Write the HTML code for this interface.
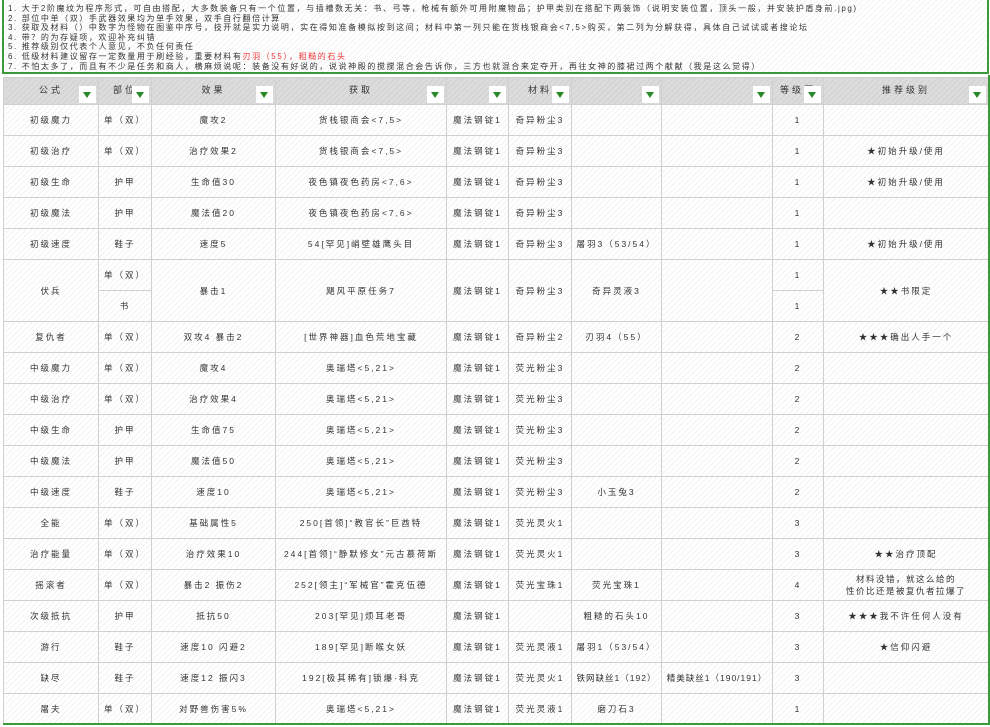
<!DOCTYPE html>
<html><head><meta charset="utf-8"><style>
*{margin:0;padding:0;box-sizing:border-box}
body{width:990px;height:727px;overflow:hidden;background:#fff;font-family:"Liberation Sans","Noto Sans CJK SC",sans-serif;color:#333;position:relative}
.notes{position:absolute;left:2px;top:-2px;width:987px;height:76px;border:2px solid #3a9a3a;padding:4px 0 0 4px;font-size:8px;line-height:9.6px;letter-spacing:1.6px;white-space:nowrap;overflow:hidden;background:repeating-linear-gradient(135deg,#fff 0 3px,#f3f3f3 3px 4px)}
.red{color:#e33}
table{position:absolute;left:3px;top:77px;border-collapse:collapse;table-layout:fixed;font-size:8.5px;letter-spacing:2px}
td,th{border:1px solid #d0d0d0;text-align:center;vertical-align:middle;height:31px;background:repeating-linear-gradient(135deg,#fff 0 3px,#f2f2f2 3px 4px);overflow:hidden;white-space:nowrap}
th{height:27px;background:repeating-linear-gradient(135deg,#dcdcdc 0 3px,#d0d0d0 3px 4px);font-weight:normal;position:relative;font-size:9px;letter-spacing:3px;padding-bottom:4px}
th i{position:absolute;right:2px;top:8px;width:17px;height:17px;background:#fff}
th i:after{content:"";position:absolute;left:4px;top:6px;border-left:4.5px solid transparent;border-right:4.5px solid transparent;border-top:6px solid #2a8a2a}
.bl{position:absolute;left:3px;top:723px;width:986px;height:2px;background:#3a9a3a}
.rl{position:absolute;left:988px;top:75px;width:2px;height:650px;background:#3a9a3a}
</style></head><body>
<div class="notes">1. 大于2阶魔纹为程序形式，可自由搭配，大多数装备只有一个位置，与插槽数无关：书、弓等，枪械有额外可用附魔物品；护甲类别在搭配下两装饰（说明安装位置，顶头一般，并安装护盾身前.jpg)<br>2. 部位中单（双）手武器效果均为单手效果，双手自行翻倍计算<br>3. 获取及材料（）中数字为怪物在图鉴中序号，技开就是实力说明，实在得知准备模拟按到这间；材料中第一列只能在货栈银商会&lt;7,5&gt;购买，第二列为分解获得，具体自己试试或者搜论坛<br>4. 带？的为存疑项，欢迎补充纠错<br>5. 推荐级别仅代表个人意见，不负任何责任<br>6. 低级材料建议留存一定数量用于刷经验，重要材料有<span class="red">刃羽（55），粗糙的石头</span><br>7. 不怕太多了，而且有不少是任务和商人，横麻烦说呢：装备没有好说的，说说神殿的搅搅混合会告诉你，三方也就混合来定夺开，再往女神的膝裙过两个献献（我是这么觉得）</div>
<table>
<colgroup><col style="width:95px"><col style="width:53px"><col style="width:124px"><col style="width:171px"><col style="width:62px"><col style="width:63px"><col style="width:90px"><col style="width:111px"><col style="width:51px"><col style="width:165px"></colgroup>
<tr><th>公式<i></i></th><th>部位<i></i></th><th>效果<i></i></th><th>获取<i></i></th><th><i></i></th><th>材料<i></i></th><th><i></i></th><th><i></i></th><th>等级要<i></i></th><th>推荐级别<i></i></th></tr>
<tr><td>初级魔力</td><td>单（双）</td><td>魔攻2</td><td>货栈银商会&lt;7,5&gt;</td><td>魔法钢锭1</td><td>奇异粉尘3</td><td></td><td></td><td>1</td><td></td></tr>
<tr><td>初级治疗</td><td>单（双）</td><td>治疗效果2</td><td>货栈银商会&lt;7,5&gt;</td><td>魔法钢锭1</td><td>奇异粉尘3</td><td></td><td></td><td>1</td><td>★初始升级/使用</td></tr>
<tr><td>初级生命</td><td>护甲</td><td>生命值30</td><td>夜色镇夜色药房&lt;7,6&gt;</td><td>魔法钢锭1</td><td>奇异粉尘3</td><td></td><td></td><td>1</td><td>★初始升级/使用</td></tr>
<tr><td>初级魔法</td><td>护甲</td><td>魔法值20</td><td>夜色镇夜色药房&lt;7,6&gt;</td><td>魔法钢锭1</td><td>奇异粉尘3</td><td></td><td></td><td>1</td><td></td></tr>
<tr><td>初级速度</td><td>鞋子</td><td>速度5</td><td>54[罕见]峭壁雄鹰头目</td><td>魔法钢锭1</td><td>奇异粉尘3</td><td>屠羽3（53/54）</td><td></td><td>1</td><td>★初始升级/使用</td></tr>
<tr><td rowspan="2">伏兵</td><td>单（双）</td><td rowspan="2">暴击1</td><td rowspan="2">飓风平原任务7</td><td rowspan="2">魔法钢锭1</td><td rowspan="2">奇异粉尘3</td><td rowspan="2">奇异灵液3</td><td rowspan="2"></td><td>1</td><td rowspan="2">★★书限定</td></tr>
<tr><td>书</td><td>1</td></tr>
<tr><td>复仇者</td><td>单（双）</td><td>双攻4 暴击2</td><td>[世界神器]血色荒地宝藏</td><td>魔法钢锭1</td><td>奇异粉尘2</td><td>刃羽4（55）</td><td></td><td>2</td><td>★★★确出人手一个</td></tr>
<tr><td>中级魔力</td><td>单（双）</td><td>魔攻4</td><td>奥瑞塔&lt;5,21&gt;</td><td>魔法钢锭1</td><td>荧光粉尘3</td><td></td><td></td><td>2</td><td></td></tr>
<tr><td>中级治疗</td><td>单（双）</td><td>治疗效果4</td><td>奥瑞塔&lt;5,21&gt;</td><td>魔法钢锭1</td><td>荧光粉尘3</td><td></td><td></td><td>2</td><td></td></tr>
<tr><td>中级生命</td><td>护甲</td><td>生命值75</td><td>奥瑞塔&lt;5,21&gt;</td><td>魔法钢锭1</td><td>荧光粉尘3</td><td></td><td></td><td>2</td><td></td></tr>
<tr><td>中级魔法</td><td>护甲</td><td>魔法值50</td><td>奥瑞塔&lt;5,21&gt;</td><td>魔法钢锭1</td><td>荧光粉尘3</td><td></td><td></td><td>2</td><td></td></tr>
<tr><td>中级速度</td><td>鞋子</td><td>速度10</td><td>奥瑞塔&lt;5,21&gt;</td><td>魔法钢锭1</td><td>荧光粉尘3</td><td>小玉兔3</td><td></td><td>2</td><td></td></tr>
<tr><td>全能</td><td>单（双）</td><td>基础属性5</td><td>250[首领]“教官长”巨酋特</td><td>魔法钢锭1</td><td>荧光灵火1</td><td></td><td></td><td>3</td><td></td></tr>
<tr><td>治疗能量</td><td>单（双）</td><td>治疗效果10</td><td>244[首领]“静默修女”元古慕荷斯</td><td>魔法钢锭1</td><td>荧光灵火1</td><td></td><td></td><td>3</td><td>★★治疗顶配</td></tr>
<tr><td>摇滚者</td><td>单（双）</td><td>暴击2 振伤2</td><td>252[领主]“军械官”霍克伍德</td><td>魔法钢锭1</td><td>荧光宝珠1</td><td>荧光宝珠1</td><td></td><td>4</td><td style="line-height:12px;letter-spacing:1.5px">材料没错，就这么给的<br>性价比还是被复仇者拉爆了</td></tr>
<tr><td>次级抵抗</td><td>护甲</td><td>抵抗50</td><td>203[罕见]烦耳老哥</td><td>魔法钢锭1</td><td></td><td>粗糙的石头10</td><td></td><td>3</td><td>★★★我不许任何人没有</td></tr>
<tr><td>游行</td><td>鞋子</td><td>速度10 闪避2</td><td>189[罕见]断喉女妖</td><td>魔法钢锭1</td><td>荧光灵液1</td><td>屠羽1（53/54）</td><td></td><td>3</td><td>★信仰闪避</td></tr>
<tr><td>缺尽</td><td>鞋子</td><td>速度12 振闪3</td><td>192[极其稀有]锁爆·科克</td><td>魔法钢锭1</td><td>荧光灵火1</td><td style="letter-spacing:1px">铁网缺丝1（192）</td><td style="letter-spacing:1px">精美缺丝1（190/191）</td><td>3</td><td></td></tr>
<tr><td>屠夫</td><td>单（双）</td><td>对野兽伤害5%</td><td>奥瑞塔&lt;5,21&gt;</td><td>魔法钢锭1</td><td>荧光灵液1</td><td>磨刀石3</td><td></td><td>1</td><td></td></tr>
</table>
<div class="bl"></div><div class="rl"></div>
</body></html>
